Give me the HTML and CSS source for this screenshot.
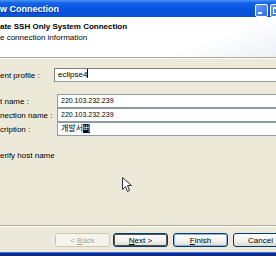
FILE: index.html
```html
<!DOCTYPE html>
<html lang="ko">
<head>
  <meta charset="UTF-8" />
  <title>New Connection</title>
  <link rel="stylesheet" href="styles.css">
</head>
<body>
  <div class="titlebar">
    <span class="title">w Connection</span>
    <div class="tb-buttons">
      <span class="tb-btn min"></span>
      <span class="tb-btn max"></span>
    </div>
  </div>

  <div class="banner">
    <div class="banner-title">ate SSH Only System Connection</div>
    <div class="banner-sub">e connection information</div>
  </div>
  <div class="sep"></div>

  <div class="content">
    <div class="row profile">
      <span class="label">ent profile :</span>
      <div class="field">eclipse4<span class="caret"></span></div>
    </div>

    <div class="group">
      <div class="row">
        <span class="label">t name :</span>
        <div class="field mono">220.103.232.239</div>
      </div>
      <div class="row">
        <span class="label">nection name :</span>
        <div class="field mono">220.103.232.239</div>
      </div>
      <div class="row">
        <span class="label">cription :</span>
        <div class="field">개발서<span class="ime">버</span></div>
      </div>
    </div>

    <div class="check">erify host name</div>

    <!-- mouse pointer -->
    <svg class="pointer" width="11" height="16" viewBox="0 0 11 16">
      <path d="M0.5 0.5 L0.5 12.5 L3.5 9.5 L5.5 14.5 L7.5 13.5 L5.5 8.5 L9.5 8.5 Z" fill="#fff" stroke="#333" stroke-width="1"/>
    </svg>
  </div>

  <div class="sep"></div>
  <div class="footer">
    <button class="btn" disabled>&lt; <u>B</u>ack</button>
    <button class="btn focus"><u>N</u>ext &gt;</button>
    <button class="btn default"><u>F</u>inish</button>
    <button class="btn">Cancel</button>
  </div>
  <div class="frame-bottom"></div>
</body>
</html>
```

FILE: styles.css
```css
body {
  margin: 0;
  width: 276px;
  height: 260px;
  overflow: hidden;
  display: flex;
  flex-direction: column;
  background: #ece9d8;
  font-family: "Liberation Sans", "Noto Sans CJK KR", sans-serif;
  font-size: 8px;
  color: #000;
}

.titlebar {
  height: 17px;
  flex: none;
  display: flex;
  justify-content: space-between;
  align-items: center;
  background: linear-gradient(to bottom, #4b94f4 0, #1463e6 3px, #0656e2 50%, #0a51d6 100%);
  overflow: hidden;
}

.title {
  color: #fff;
  font-weight: bold;
  font-size: 9px;
  text-shadow: 1px 1px 0 #0b3a9c;
}

.tb-buttons {
  display: flex;
  gap: 2px;
  margin-right: -7px;
  margin-top: 3px;
}

.tb-btn {
  width: 11px;
  height: 11px;
  border: 1px solid #fff;
  border-radius: 2px;
  background: linear-gradient(135deg, #6a9cf6, #2d6ee8);
  position: relative;
}

.tb-btn.min::after {
  content: "";
  position: absolute;
  left: 2px;
  bottom: 2px;
  width: 4px;
  height: 2px;
  background: #fff;
}

.tb-btn.max::after {
  content: "";
  position: absolute;
  left: 2px;
  top: 2px;
  width: 5px;
  height: 4px;
  border: 1px solid #fff;
  border-top-width: 2px;
}

.banner {
  height: 40px;
  flex: none;
  box-sizing: border-box;
  padding-top: 4px;
  background: linear-gradient(160deg, #fff 70%, #eef1f8 100%);
  line-height: 11px;
}

.banner-title {
  font-weight: bold;
}

.sep {
  height: 0;
  flex: none;
  border-top: 1px solid #aca899;
  border-bottom: 1px solid #fff;
}

.content {
  flex: 1;
  position: relative;
  padding-top: 9px;
}

.row {
  display: grid;
  grid-template-columns: 57px 1fr;
  align-items: center;
}

.row.profile {
  grid-template-columns: 54px 1fr;
}

.group {
  margin-top: 12px;
}

.field {
  height: 14px;
  box-sizing: border-box;
  border: 1px solid #8e9aa8;
  border-right: none;
  background: #fff;
  padding-left: 3px;
  line-height: 12px;
  white-space: nowrap;
}

.row.profile .field {
  border-top-color: #80807a;
  border-left-color: #80807a;
}

.field.mono {
  font-size: 7px;
}

.caret {
  display: inline-block;
  width: 1px;
  height: 9px;
  background: #000;
  vertical-align: -1px;
}

.ime {
  background: #000;
  color: #fff;
}

.check {
  margin-top: 14px;
  line-height: 11px;
}

.pointer {
  position: absolute;
  left: 122px;
  top: 118px;
}

.footer {
  height: 25px;
  flex: none;
  display: flex;
  gap: 5px;
  padding: 6px 0 0 55px;
  box-sizing: border-box;
}

.btn {
  width: 55px;
  height: 14px;
  flex: none;
  padding: 0;
  font: inherit;
  color: #000;
  border: 1px solid #003c74;
  border-radius: 3px;
  background: linear-gradient(to bottom, #fff 0, #f3f2ec 60%, #dcd8cb 100%);
}

.btn:first-child {
  margin-right: -2px;
}

.btn:disabled {
  border-color: #c9c7ba;
  background: #f5f4ea;
  color: #aca899;
}

.btn.focus {
  box-shadow: inset 0 0 0 1px #555;
}

.btn.default {
  box-shadow: inset 0 0 0 1px #8fb0ec;
}

.frame-bottom {
  height: 8px;
  flex: none;
  box-sizing: border-box;
  border-top: 1px solid #3c6fe0;
  border-bottom: 4px solid #fff;
  background: #0c2b96;
}
```
